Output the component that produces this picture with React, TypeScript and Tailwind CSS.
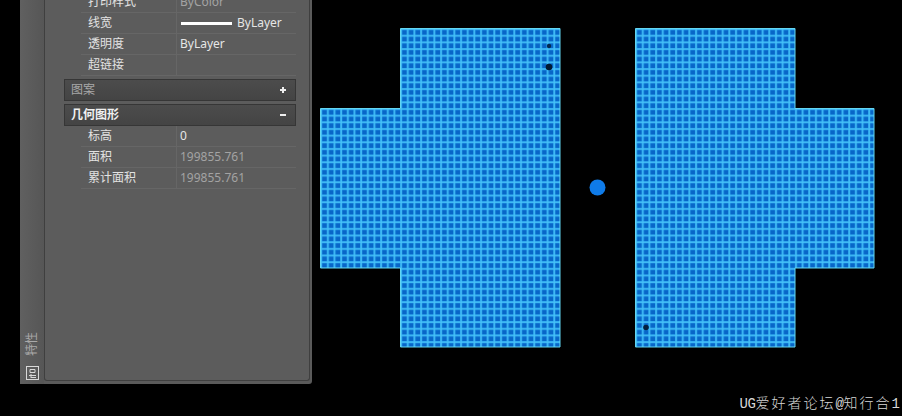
const F = { fontFamily: '"Noto Sans", "Noto Sans CJK SC", sans-serif' };

function Row({ label, value, dim, children }: { label: string; value?: string; dim?: boolean; children?: React.ReactNode }) {
  return (
    <div className="flex h-[21px] items-center border-b border-[#666666] text-[12px] leading-none">
      <div className="flex h-full w-[96px] items-center border-r border-[#666666] pl-[7px] text-[#e2e2e2]">{label}</div>
      <div className={`flex flex-1 items-center pl-[3px] ${dim ? "text-[#a3a3a3]" : "text-[#e6e6e6]"}`}>
        {children}
        {value}
      </div>
    </div>
  );
}

function Header({ label, sign, active }: { label: string; sign: string; active?: boolean }) {
  return (
    <div className={`flex h-[22px] items-center justify-between border border-[#363636] bg-gradient-to-b from-[#4c4c4c] to-[#444444] pl-[6px] pr-[9px] text-[12px] leading-none ${active ? "font-bold text-[#f0f0f0]" : "text-[#a8a8a8]"}`}>
      <span>{label}</span>
      <span className="relative block h-[6px] w-[6px]">
        <span className="absolute left-0 top-[2px] h-[2px] w-[6px] bg-[#eeeeee]" />
        {sign === "+" && <span className="absolute left-[2px] top-0 h-[6px] w-[2px] bg-[#eeeeee]" />}
      </span>
    </div>
  );
}

function GridPattern({ id, x }: { id: string; x: number }) {
  const p = 6.66;
  return (
    <pattern id={id} patternUnits="userSpaceOnUse" x={x} y="28" width={p} height={p}>
      <rect width={p} height={p} fill="#0866c8" />
      <rect x="-0.5" y="0" width={p + 1} height="2.2" fill="#26a0ee" />
      <rect x="0" y="-0.5" width="2.2" height={p + 1} fill="#26a0ee" />
      <rect x="0" y="0.6" width={p} height="1" fill="#4cc6f8" />
      <rect x="0.6" y="0" width="1" height={p} fill="#4cc6f8" />
    </pattern>
  );
}

function Shapes() {
  return (
    <svg width="590" height="416" viewBox="312 0 590 416" className="block">
      <defs>
        <GridPattern id="gridL" x={400} />
        <GridPattern id="gridR" x={635} />
      </defs>
      <polygon points="400.5,28.5 560,28.5 560,347 400.5,347 400.5,268 320.5,268 320.5,108.5 400.5,108.5" fill="url(#gridL)" stroke="#63d6f2" strokeWidth="1" />
      <polygon points="635.5,28.5 795,28.5 795,108.5 874,108.5 874,268 795,268 795,347 635.5,347" fill="url(#gridR)" stroke="#63d6f2" strokeWidth="1" />
      <circle cx="597.5" cy="187.5" r="8" fill="#0f7be8" />
      <circle cx="549" cy="46" r="2.2" fill="#06294f" />
      <circle cx="549" cy="67" r="3.3" fill="#021a33" />
      <circle cx="646" cy="327.5" r="2.8" fill="#03203f" />
    </svg>
  );
}

export default function App() {
  return (
    <div className="relative flex h-[416px] w-[902px] items-start overflow-hidden bg-black" style={F}>
      <div className="ml-[20px] flex h-[384px] w-[292px] shrink-0 rounded-b-[3px] bg-[#5a5a5a]">
        <div className="flex w-[24px] shrink-0 flex-col items-center justify-end gap-[10px] bg-gradient-to-r from-[#606060] to-[#565656] pb-[4px]">
          <span className="rotate-180 text-[12px] leading-none text-[#a9a9a9] [text-orientation:sideways] [writing-mode:vertical-rl]">特性</span>
          <svg width="13" height="14" viewBox="0 0 13 14" fill="none" stroke="#d8d8d8" strokeWidth="1">
            <rect x="0.5" y="0.5" width="12" height="13" />
            <path d="M4 3.5h5v3H4zM3 9.5h7M5 8v4M5 11.5h5" />
          </svg>
        </div>
        <div className="mb-[3px] mr-[2px] flex-1 overflow-hidden rounded-b-[3px] border-b border-l border-r border-[#3f3f3f] bg-[#5c5c5c] pl-[19px] pr-[13px]">
          <div className="-mt-[8px]">
            <div className="ml-[17px]">
              <Row label="打印样式" value="ByColor" dim />
              <Row label="线宽" value="ByLayer">
                <span className="ml-[1px] mr-[5px] h-[3px] w-[51px] bg-white" />
              </Row>
              <Row label="透明度" value="ByLayer" />
              <Row label="超链接" />
            </div>
            <div className="mt-[3px]">
              <Header label="图案" sign="+" />
            </div>
            <div className="mt-[3px]">
              <Header label="几何图形" sign="-" active />
            </div>
            <div className="ml-[17px]">
              <Row label="标高" value="0" />
              <Row label="面积" value="199855.761" dim />
              <Row label="累计面积" value="199855.761" dim />
            </div>
          </div>
        </div>
      </div>
      <Shapes />
      <div className="absolute bottom-[5px] right-[2px] flex items-baseline whitespace-nowrap text-[14px] font-light leading-none text-[#d8d8d8]" style={{ fontFamily: '"Liberation Mono", "Noto Sans CJK SC", monospace' }}>
        <span className="tracking-[-0.4px]">UG</span>
        <span className="tracking-[2px]">爱好者论坛</span>
        <span className="tracking-[-0.4px]">@</span>
        <span className="tracking-[2px]">知行合</span>
        <span>1</span>
      </div>
    </div>
  );
}
